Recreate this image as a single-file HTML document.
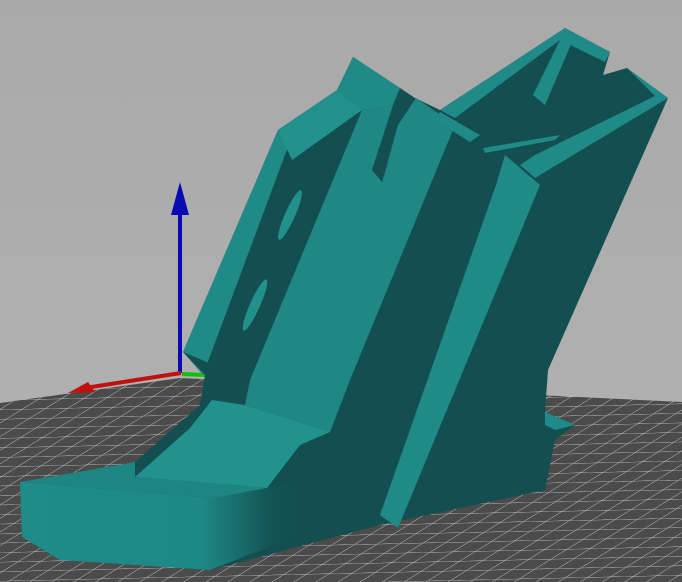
<!DOCTYPE html>
<html><head><style>html,body{margin:0;padding:0;width:682px;height:582px;overflow:hidden}</style></head>
<body>
<svg width="682" height="582" viewBox="0 0 682 582" xmlns="http://www.w3.org/2000/svg">
<defs>
<linearGradient id="bg" x1="0" y1="0" x2="0" y2="1"><stop offset="0" stop-color="#a9a9a9"/><stop offset="1" stop-color="#b3b3b3"/></linearGradient>
<linearGradient id="front" x1="0" y1="0" x2="1" y2="0"><stop offset="0" stop-color="#1f8c89"/><stop offset="0.65" stop-color="#1e8885"/><stop offset="0.9" stop-color="#135354"/><stop offset="1" stop-color="#124e4f"/></linearGradient>
<pattern id="grid" width="22" height="22" patternUnits="userSpaceOnUse" patternTransform="skewX(-60) scale(1,0.45) rotate(-3)"><rect width="22" height="22" fill="#4b4b4b"/><path d="M0 0H22M0 0V22" stroke="#c8c8c8" stroke-width="1.6"/></pattern>
</defs>
<rect width="682" height="582" fill="url(#bg)"/>
<polygon points="0,403 180,378 682,402 682,582 0,582" fill="url(#grid)"/>
<line x1="180" y1="373" x2="180" y2="210" stroke="#0a0ab4" stroke-width="4"/>
<polygon points="180,182 171,215 189,215" fill="#0a0ab4"/>
<line x1="181" y1="373" x2="85" y2="388" stroke="#c01010" stroke-width="4"/>
<polygon points="68,393 88,382 95,392" fill="#c01010"/>
<line x1="182" y1="374" x2="205" y2="375" stroke="#12c012" stroke-width="4"/>
<polygon fill="#134f50" points="183,352 278,130 337,90 353,57 400,88 415,98 440,110 565,28 610,52 603,75 627,68 668,98 548,370 545,412 575,425 555,440 545,490 380,525 210,570 60,560 22,537 20,482 135,462 200,405 205,375"/>
<polygon fill="#1f8a87" points="183,352 278,130 295,128 203,375"/>
<polygon fill="#22918e" points="278,130 337,90 362,110 292,160"/>
<polygon fill="#1f8a87" points="337,90 353,57 400,88 393,105 362,110"/>
<ellipse cx="290" cy="215" rx="5" ry="27" transform="rotate(24 290 215)" fill="#22918e"/>
<ellipse cx="255" cy="305" rx="5" ry="28" transform="rotate(24 255 305)" fill="#22918e"/>
<!-- center light face -->
<polygon fill="#1f8785" points="362,110 393,105 372,170 382,182 398,125 416,98 455,125 350,380 330,432 245,405 250,380"/>
<polygon fill="#134f50" points="372,168 382,182 388,162 380,160"/>
<!-- bottom of plate dark -->
<polygon fill="#134f50" points="183,352 205,375 240,398 250,380"/>
<!-- ramp -->
<polygon fill="#22928f" points="212,400 245,405 330,432 300,445 267,488 135,477 190,428"/>
<polygon fill="#1d8683" points="20,482 135,462 135,477 267,488 215,498"/>
<polygon fill="url(#front)" points="20,482 215,498 267,488 300,482 300,535 210,570 60,560 22,537"/>
<polygon fill="#1f8a87" points="505,155 540,185 398,528 380,515 496,185"/>
<polygon fill="#1f8a87" points="440,110 565,28 610,52 605,62 560,40 455,118"/>
<polygon fill="#1f8a87" points="560,40 575,35 545,105 533,95"/>
<polygon fill="#1f8a87" points="627,68 668,98 535,178 520,165 535,155 655,96"/>
<polygon fill="#1f8a87" points="440,112 480,135 470,142 435,120"/>
<polygon fill="#1f8a87" points="483,148 560,135 555,140 485,153"/>
<polygon fill="#1f8a87" points="545,412 575,425 555,430 545,425"/>
</svg>
</body></html>
